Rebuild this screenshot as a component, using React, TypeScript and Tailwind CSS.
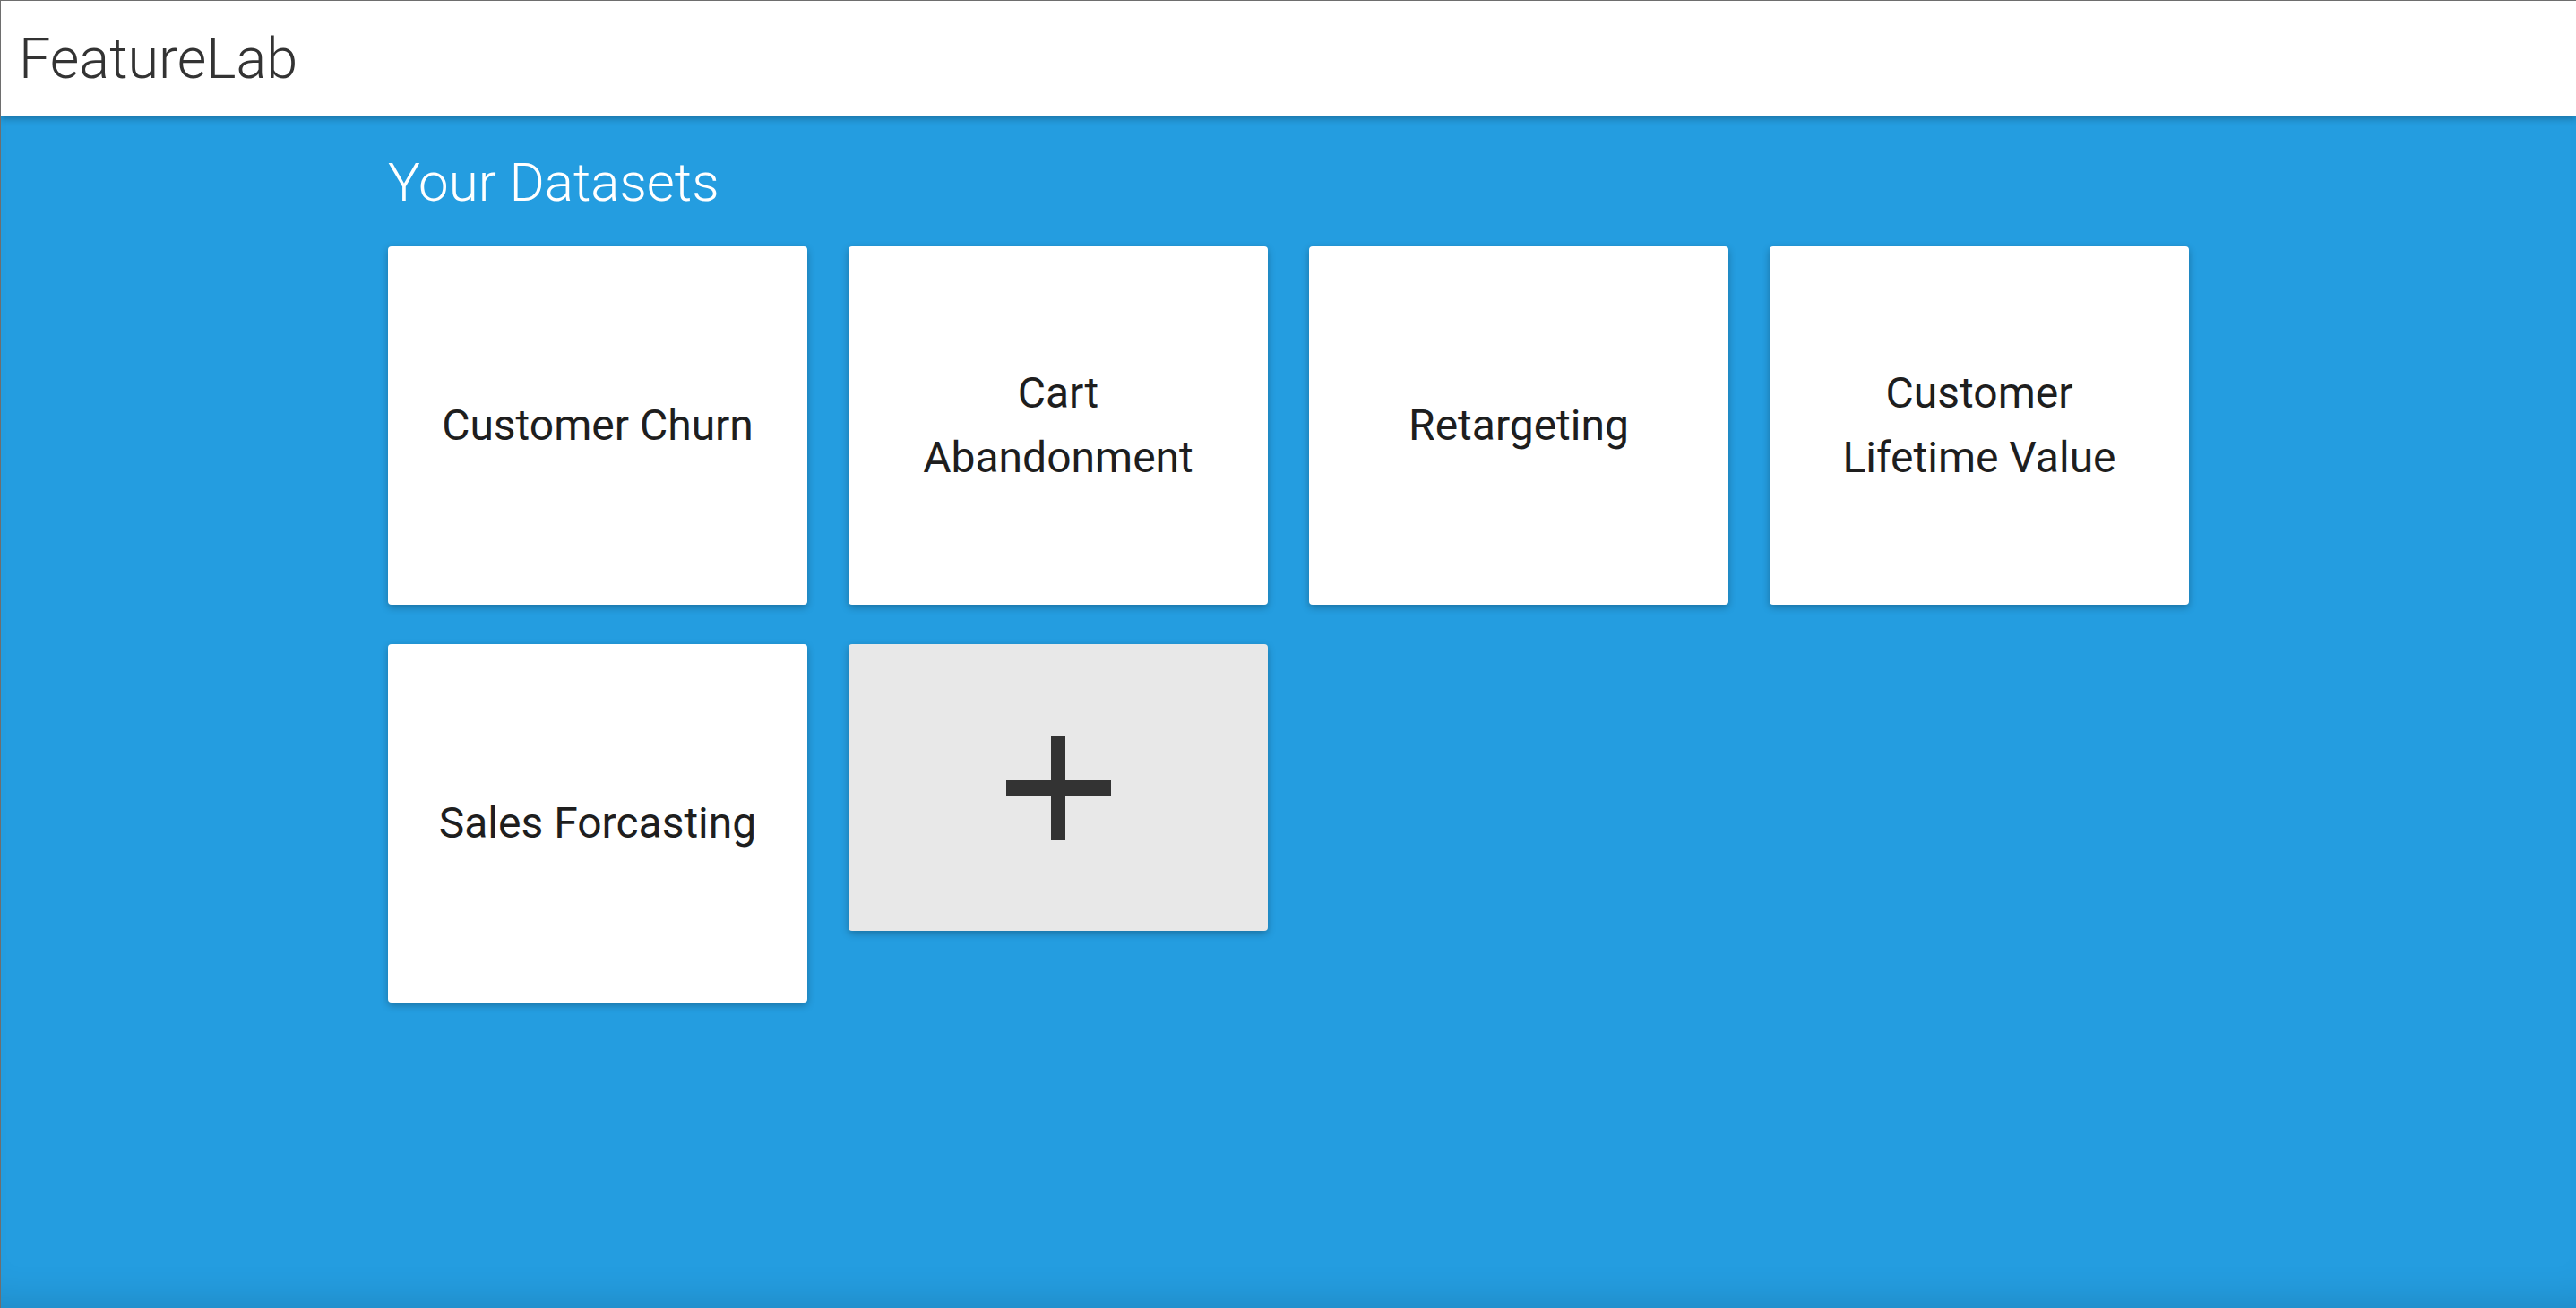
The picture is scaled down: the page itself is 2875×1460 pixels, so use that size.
const datasets = [
    ["Customer Churn"],
    ["Cart", "Abandonment"],
    ["Retargeting"],
    ["Customer", "Lifetime Value"],
    ["Sales Forcasting"],
];

const DatasetCard = ({lines}: {lines: string[]}) => {
    return (
        <div className="h-[400px] bg-white rounded-[4px] shadow-[0_3px_8px_rgba(0,0,0,0.28)] flex flex-col items-center justify-center text-[48px] leading-[72px] text-[#1e1e1e] text-center cursor-pointer">
            {lines.map((line) => (
                <span key={line}>{line}</span>
            ))}
        </div>
    );
};

const AddCard = () => {
    return (
        <div className="h-[320px] bg-[#e8e8e8] rounded-[4px] shadow-[0_3px_8px_rgba(0,0,0,0.28)] flex items-center justify-center cursor-pointer">
            <div className="relative w-[117px] h-[117px]">
                <div className="absolute left-[50px] top-0 w-[16px] h-[117px] bg-[#333333]" />
                <div className="absolute left-0 top-[50px] w-[117px] h-[17px] bg-[#333333]" />
            </div>
        </div>
    );
};

export default function App() {
    return (
        <div className="w-full h-[1460px] flex flex-col bg-[#249de0] border-l border-l-[#6e6e6e] font-['Roboto','Liberation_Sans',sans-serif] overflow-hidden">
            <div className="w-full h-[129px] shrink-0 bg-white border-t border-t-[#6e6e6e] flex items-center pl-[20px] shadow-[0_3px_8px_rgba(0,0,0,0.3)] z-10">
                <span className="text-[63px] leading-[63px] font-light text-[#333333]">FeatureLab</span>
            </div>
            <div className="flex-1 w-full shadow-[inset_0_-40px_40px_-30px_rgba(0,0,0,0.12)]">
                <div className="w-[2010px] mx-auto pt-[45px]">
                    <h1 className="text-[60px] leading-[60px] font-light text-white">Your Datasets</h1>
                    <div className="mt-[41px] grid grid-cols-4 gap-x-[46px] gap-y-[44px] items-start">
                        {datasets.map((lines) => (
                            <DatasetCard key={lines.join(" ")} lines={lines} />
                        ))}
                        <AddCard />
                    </div>
                </div>
            </div>
        </div>
    );
}
